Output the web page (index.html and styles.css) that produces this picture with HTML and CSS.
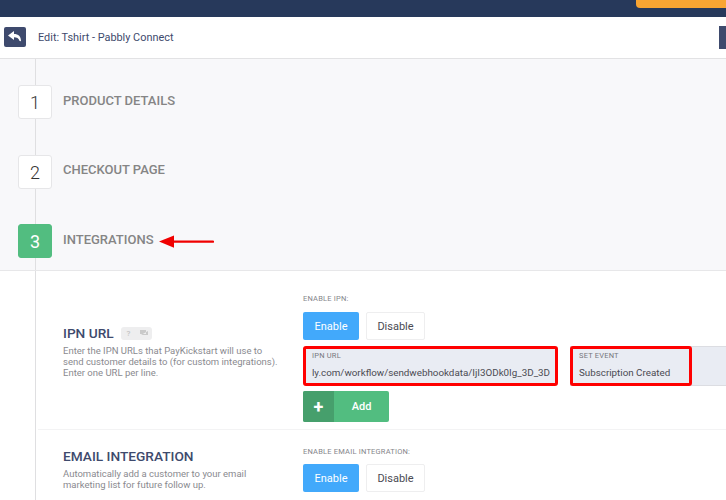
FILE: index.html
```html
<!DOCTYPE html>
<html lang="en">
<head>
<meta charset="utf-8">
<title>Edit: Tshirt - Pabbly Connect</title>
<link rel="stylesheet" href="styles.css">
</head>
<body>
<div class="page">
  <header class="topbar">
    <div class="upgrade"></div>
  </header>
  <div class="toolbar">
    <button class="back" aria-label="Back">
      <svg width="14" height="12" viewBox="0 0 14 12"><path d="M6 0 0 4.600 6 9V6.200c2.800 0 4.700.8 5.600 3.800.8.1 1.400.2 1.400.2C13 5.400 10.400 3 6 3z" fill="#fff"/></svg>
    </button>
    <span class="toolbar-title">Edit: Tshirt - Pabbly Connect</span>
    <span class="toolbar-action"></span>
  </div>
  <div class="content">
    <section class="steps">
      <div class="step"><span class="step-num">1</span><span class="step-label">PRODUCT DETAILS</span></div>
      <div class="step step-two"><span class="step-num">2</span><span class="step-label">CHECKOUT PAGE</span></div>
      <div class="step step-three"><span class="step-num active">3</span><span class="step-label">INTEGRATIONS</span>
        <svg class="arrow" width="55" height="13" viewBox="0 0 55 13"><path d="M0 6.500 15 .5v5h39a1 1 0 0 1 0 2.200H15v5z" fill="#f00000"/></svg>
      </div>
    </section>
    <section class="panel">
      <div class="row row-ipn">
        <div class="info">
          <h2 class="info-title">IPN URL <span class="help"><i>?</i><i>
            <svg width="9" height="8" viewBox="0 0 9 8"><path d="M1 1h6v4H1zM2 6h7V2" fill="#c9c9c9"/></svg></i></span></h2>
          <p class="info-text">Enter the IPN URLs that PayKickstart will use to send customer details to (for custom integrations). Enter one URL per line.</p>
        </div>
        <div class="controls">
          <div class="small-label">ENABLE IPN:</div>
          <div class="toggle"><span class="btn btn-on">Enable</span><span class="btn btn-off">Disable</span></div>
          <div class="fields">
            <div class="field field-url"><label>IPN URL</label><div class="value value-url"><span>bly.com/workflow/sendwebhookdata/IjI3ODk0Ig_3D_3D</span></div></div>
            <div class="event-wrap"><div class="field field-event"><label>SET EVENT</label><div class="value value-event">Subscription Created</div></div></div>
          </div>
          <div class="add"><span class="add-icon">+</span><span class="add-text">Add</span></div>
        </div>
      </div>
      <div class="row row-email">
        <div class="info">
          <h2 class="info-title">EMAIL INTEGRATION</h2>
          <p class="info-text">Automatically add a customer to your email marketing list for future follow up.</p>
        </div>
        <div class="controls">
          <div class="small-label">ENABLE EMAIL INTEGRATION:</div>
          <div class="toggle toggle-email"><span class="btn btn-on">Enable</span><span class="btn btn-off">Disable</span></div>
        </div>
      </div>
    </section>
  </div>
</div>
</body>
</html>
```
FILE: styles.css
```css
* { box-sizing: border-box; }
html, body { margin: 0; padding: 0; }
body { font-family: "Roboto", "Liberation Sans", sans-serif; background: #fff; overflow: hidden; }
.page { width: 726px; height: 500px; overflow: hidden; }

.topbar { height: 17px; background: #27395b; display: flex; justify-content: flex-end; }
.upgrade { width: 90px; height: 8px; background: #f9a532; border-radius: 0 0 0 4px; }

.toolbar { height: 42px; background: #fff; border-bottom: 1px solid #e2e2e4; display: flex; align-items: center; padding-left: 4px; padding-bottom: 1px; }
.back { width: 22px; height: 20px; padding: 0; border: 0; border-radius: 2px; background: #3e4a6d; display: flex; align-items: center; justify-content: center; }
.toolbar-title { margin-left: 12px; font-size: 10.900px; color: #3e4a6d; }
.toolbar-action { margin-left: auto; width: 7px; height: 23px; background: #3e4a6d; }

.content { position: relative; }

.steps { position: relative; height: 212px; padding: 26px 0 0 18px; border-bottom: 1px solid #e7e7e9; background: #f8f8fa; }
.steps::before { content: ""; position: absolute; left: 35px; top: 0; bottom: 0; width: 1px; background: #dfdfe1; }
.step { position: relative; display: flex; align-items: flex-start; height: 34px; }
.step-two { margin-top: 36px; }
.step-three { margin-top: 35px; }
.step-num { width: 34px; height: 34px; background: #fff; border: 1px solid #e6e6e8; border-radius: 3px; display: flex; align-items: center; justify-content: center; font-size: 18px; font-weight: 300; color: #333; }
.step-num.active { background: #52bd80; border-color: #52bd80; color: #fff; font-weight: 400; }
.step-label { margin-left: 11px; margin-top: 8px; font-size: 13px; font-weight: 500; line-height: 16px; color: #858585; }
.step-two .step-label { margin-top: 7px; }
.arrow { margin-left: 5px; margin-top: 11px; }

.panel { position: relative; background: #fff; height: 229px; }
.panel::before { content: ""; position: absolute; left: 35px; top: 0; bottom: 0; width: 1px; background: #dfdfe1; }
.row { display: flex; margin-left: 38px; }
.row-ipn { height: 159px; border-bottom: 1px solid #f3f3f4; }
.info { width: 240px; margin-left: 25px; flex: none; }
.row-ipn .info { padding-top: 53px; }
.row-email .info { padding-top: 17px; }
.info-title { margin: 0; font-size: 13.700px; line-height: 18px; font-weight: 500; color: #3e4a6d; display: flex; align-items: center; }
.help { display: inline-flex; margin-left: 7px; width: 31px; height: 13px; background: #eeeeef; border-radius: 3px; }
.help i { flex: 1; font-style: normal; font-size: 8px; line-height: 13px; text-align: center; color: #c4c4c4; display: flex; align-items: center; justify-content: center; }
.info-text { margin: 3px 0 0; font-size: 9.500px; line-height: 11px; color: #8a8a8f; width: 218px; }

.controls { flex: 1; min-width: 0; }
.row-ipn .controls { padding-top: 23px; }
.row-email .controls { padding-top: 17px; }
.small-label { font-size: 7.500px; line-height: 9px; letter-spacing: .2px; color: #85858a; }
.toggle { display: flex; gap: 7px; margin-top: 9px; }
.toggle-email { margin-top: 8px; }
.btn { height: 28px; border-radius: 2px; display: flex; align-items: center; justify-content: center; font-size: 11px; }
.btn-on { width: 56px; background: #42a9fb; color: #fff; }
.btn-off { width: 59px; background: #fff; border: 1px solid #eeeeef; color: #4a4a52; }

.fields { display: flex; margin-top: 6px; gap: 12px; }
.field { height: 40px; background: #e9ecf3; border: 3px solid #ff0000; border-radius: 3px; padding: 2px 5px 0 6px; }
.field label { display: block; font-size: 7.500px; line-height: 9px; color: #77777d; letter-spacing: .2px; }
.value { margin-top: 6px; font-size: 9.800px; line-height: 14px; color: #4a4a52; white-space: nowrap; }
.field-url { width: 255px; }
.value-url { overflow: hidden; display: flex; justify-content: flex-end; }
.value-url span { flex: none; }
.event-wrap { flex: 1; height: 40px; background: #e9ecf3; border: 1px solid #dcdde2; border-right: 0; }
.field-event { width: 122px; margin: -1px 0 0 -1px; }

.add { display: flex; width: 86px; height: 31px; margin-top: 5px; border-radius: 2px; overflow: hidden; background: #52bd80; color: #fff; font-weight: 700; }
.add-icon { width: 31px; background: #469f6c; display: flex; align-items: center; justify-content: center; font-size: 18px; }
.add-text { flex: 1; display: flex; align-items: center; justify-content: center; font-size: 11px; font-weight: 500; }
```
